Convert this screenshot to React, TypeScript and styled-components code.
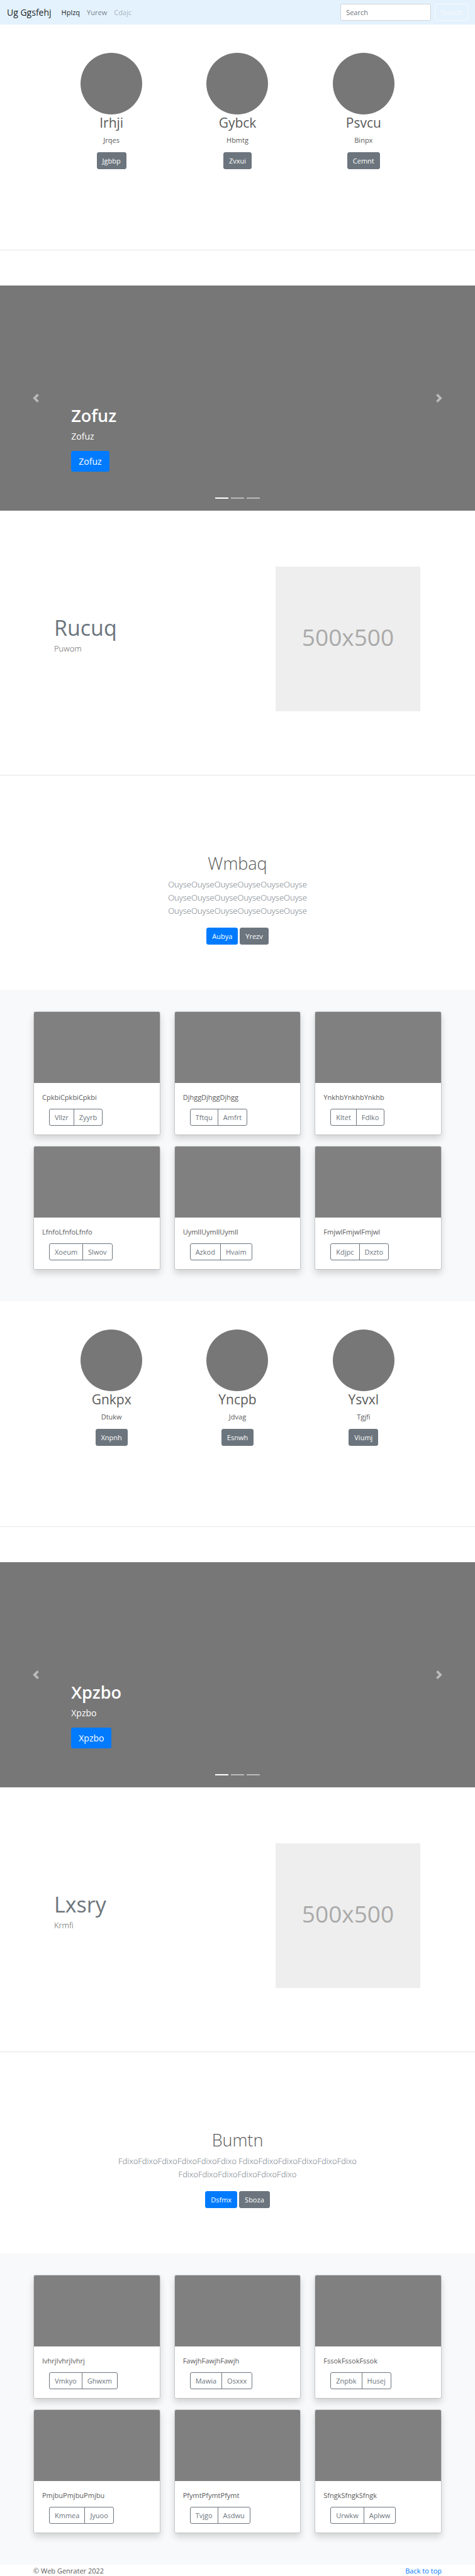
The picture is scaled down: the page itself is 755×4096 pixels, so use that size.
import React from "react";
import styled, { createGlobalStyle, css } from "styled-components";

const GlobalStyle = createGlobalStyle`
  *, *::before, *::after { box-sizing: border-box; }
  body {
    margin: 0;
    background: #fff;
    color: #5a5a5a;
    font: 400 11px/17px "Open Sans", "Noto Sans", sans-serif;
  }
  h1, h2, p { margin: 0; }
  a { color: #007bff; text-decoration: none; }
  button, input { font: inherit; }
`;

const Navbar = styled.nav`
  display: flex;
  align-items: center;
  justify-content: space-between;
  padding: 6px 11px;
  background: #e3f2fd;
`;

const NavGroup = styled.div`
  display: flex;
  align-items: center;
`;

const Brand = styled.a`
  margin-right: 16px;
  font-size: 14px;
  line-height: 21px;
  color: rgba(0, 0, 0, 0.9);
`;

const NavLinks = styled.ul`
  display: flex;
  gap: 11px;
  margin: 0;
  padding: 0;
  list-style: none;
`;

const NavLink = styled.a<{ $tone: number }>`
  color: rgba(0, 0, 0, ${(p) => p.$tone});
`;

const SearchForm = styled.form`
  display: flex;
  gap: 6px;
`;

const SearchInput = styled.input`
  width: 144px;
  padding: 4px 8px;
  border: 1px solid #ced4da;
  border-radius: 3px;
  background: #fff;
  color: #495057;
  &::placeholder {
    color: #6c757d;
    opacity: 1;
  }
`;

type Variant = "primary" | "secondary" | "light" | "outline";

const variants = {
  primary: css`
    background: #007bff;
    border-color: #007bff;
    color: #fff;
  `,
  secondary: css`
    background: #6c757d;
    border-color: #6c757d;
    color: #fff;
  `,
  light: css`
    background: transparent;
    border-color: #f8f9fa;
    color: #f8f9fa;
  `,
  outline: css`
    background: transparent;
    border-color: #6c757d;
    color: #6c757d;
  `,
};

const Button = styled.button<{ $variant: Variant; $large?: boolean }>`
  padding: ${(p) => (p.$large ? "5px 11px" : "4px 8px")};
  border: 1px solid;
  border-radius: 3px;
  font-size: ${(p) => (p.$large ? 14 : 11)}px;
  line-height: ${(p) => (p.$large ? 21 : 17)}px;
  cursor: pointer;
  ${(p) => variants[p.$variant]}
`;

const Divider = styled.hr`
  height: 1px;
  margin: 0;
  border: 0;
  background: #e5e5e5;
`;

const People = styled.section`
  display: grid;
  grid-template-columns: repeat(3, 1fr);
  padding: 45px 77px 128px;
`;

const Person = styled.article`
  display: flex;
  flex-direction: column;
  align-items: center;
`;

const Avatar = styled.div`
  width: 98px;
  height: 98px;
  border-radius: 50%;
  background: #777;
`;

const PersonName = styled.h2`
  margin-bottom: 5px;
  font-size: 21px;
  line-height: 27px;
  font-weight: 400;
`;

const PersonText = styled.p`
  margin-bottom: 11px;
`;

const CarouselFrame = styled.section`
  position: relative;
  display: grid;
  grid-template-columns: 15% 1fr 15%;
  height: 358px;
  margin-top: 56px;
  background: #777;
  color: #fff;
`;

const CarouselControl = styled.button`
  display: flex;
  align-items: center;
  justify-content: center;
  padding: 0;
  border: 0;
  background: none;
  opacity: 0.5;
  cursor: pointer;
`;

const Caption = styled.div`
  display: flex;
  flex-direction: column;
  align-items: flex-start;
  justify-content: flex-end;
  padding-bottom: 62px;
`;

const CaptionTitle = styled.h1`
  margin-bottom: 5px;
  font-size: 27px;
  line-height: 34px;
  font-weight: 600;
`;

const CaptionText = styled.p`
  margin-bottom: 13px;
  font-size: 14px;
  line-height: 21px;
`;

const Indicators = styled.div`
  position: absolute;
  left: 0;
  right: 0;
  bottom: 19px;
  display: flex;
  justify-content: center;
  gap: 4px;
`;

const Indicator = styled.button<{ $active: boolean }>`
  width: 21px;
  height: 2px;
  padding: 0;
  border: 0;
  background: #fff;
  opacity: ${(p) => (p.$active ? 1 : 0.5)};
`;

const FeatureRow = styled.section`
  display: grid;
  grid-template-columns: 1fr minmax(0, 230px);
  align-items: center;
  padding: 89px 87px 101px 86px;
`;

const FeatureTitle = styled.h2`
  margin-bottom: 2px;
  font-size: 34px;
  line-height: 42px;
  font-weight: 400;
  color: #6c757d;
`;

const FeatureText = styled.p`
  margin-bottom: 14px;
  font-size: 13px;
  line-height: 21px;
  font-weight: 300;
`;

const Placeholder = styled.div`
  display: flex;
  align-items: center;
  justify-content: center;
  aspect-ratio: 1;
  padding-bottom: 6px;
  background: #eee;
  color: #aaa;
  font-size: 37px;
  line-height: 42px;
`;

const Jumbotron = styled.section`
  display: flex;
  flex-direction: column;
  align-items: center;
  padding: 123px 53px 72px;
  text-align: center;
`;

const JumboTitle = styled.h1`
  margin-bottom: 6px;
  font-size: 27px;
  line-height: 34px;
  font-weight: 300;
`;

const JumboText = styled.p`
  max-width: 420px;
  margin-bottom: 16px;
  font-size: 13px;
  line-height: 21px;
  font-weight: 300;
  color: #6c757d;
`;

const JumboActions = styled.div`
  display: flex;
  gap: 3px;
`;

const Album = styled.section`
  display: grid;
  grid-template-columns: repeat(3, 1fr);
  gap: 17px 22px;
  padding: 34px 53px 50px;
  background: #f8f9fa;
`;

const Card = styled.article`
  overflow: hidden;
  border: 1px solid rgba(0, 0, 0, 0.125);
  border-radius: 3px;
  background: #fff;
  background-clip: padding-box;
  box-shadow: 0 6px 11px rgba(0, 0, 0, 0.15);
`;

const CardImage = styled.div`
  height: 113px;
  background: #808080;
`;

const CardBody = styled.div`
  padding: 14px 13px;
`;

const CardText = styled.p`
  margin-bottom: 10px;
`;

const ButtonGroup = styled.div`
  display: flex;
  margin-left: 11px;
  & > button:first-child {
    border-radius: 3px 0 0 3px;
  }
  & > button:last-child {
    margin-left: -1px;
    border-radius: 0 3px 3px 0;
  }
`;

const Footer = styled.footer`
  display: flex;
  justify-content: space-between;
  padding: 1px 53px 0;
`;

interface Block {
  people: [string, string, string][];
  slide: string;
  feature: [string, string];
  jumbo: { title: string; word: string; actions: [string, string] };
  cards: [string, string, string][];
}

const blocks: Block[] = [
  {
    people: [
      ["Irhji", "Jrqes", "Jgbbp"],
      ["Gybck", "Hbmtg", "Zvxui"],
      ["Psvcu", "Binpx", "Cemnt"],
    ],
    slide: "Zofuz",
    feature: ["Rucuq", "Puwom"],
    jumbo: { title: "Wmbaq", word: "Ouyse", actions: ["Aubya", "Yrezv"] },
    cards: [
      ["Cpkbi", "Vllzr", "Zyyrb"],
      ["Djhgg", "Tftqu", "Amfrt"],
      ["Ynkhb", "Kltet", "Fdlko"],
      ["Lfnfo", "Xoeum", "Slwov"],
      ["Uymll", "Azkod", "Hvaim"],
      ["Fmjwl", "Kdjpc", "Dxzto"],
    ],
  },
  {
    people: [
      ["Gnkpx", "Dtukw", "Xnpnh"],
      ["Yncpb", "Jdvag", "Esnwh"],
      ["Ysvxl", "Tgjfi", "Viumj"],
    ],
    slide: "Xpzbo",
    feature: ["Lxsry", "Krmfi"],
    jumbo: { title: "Bumtn", word: "Fdixo", actions: ["Dsfmx", "Sboza"] },
    cards: [
      ["Ivhrj", "Vmkyo", "Ghwxm"],
      ["Fawjh", "Mawia", "Osxxx"],
      ["Fssok", "Znpbk", "Husej"],
      ["Pmjbu", "Kmmea", "Jyuoo"],
      ["Pfymt", "Tvjgo", "Asdwu"],
      ["Sfngk", "Urwkw", "Aplww"],
    ],
  },
];

function Chevron({ direction }: { direction: "left" | "right" }) {
  return (
    <svg width="14" height="14" viewBox="0 0 8 8" fill="#fff" aria-hidden="true">
      {direction === "left" ? (
        <path d="M5.25 0l-4 4 4 4 1.5-1.5-2.5-2.5 2.5-2.5-1.5-1.5z" />
      ) : (
        <path d="M2.75 0l-1.5 1.5 2.5 2.5-2.5 2.5 1.5 1.5 4-4-4-4z" />
      )}
    </svg>
  );
}

function Carousel({ label }: { label: string }) {
  return (
    <CarouselFrame>
      <CarouselControl type="button" aria-label="Previous">
        <Chevron direction="left" />
      </CarouselControl>
      <Caption>
        <CaptionTitle>{label}</CaptionTitle>
        <CaptionText>{label}</CaptionText>
        <Button type="button" $variant="primary" $large>
          {label}
        </Button>
      </Caption>
      <CarouselControl type="button" aria-label="Next">
        <Chevron direction="right" />
      </CarouselControl>
      <Indicators>
        {[0, 1, 2].map((i) => (
          <Indicator key={i} type="button" $active={i === 0} aria-label={`Slide ${i + 1}`} />
        ))}
      </Indicators>
    </CarouselFrame>
  );
}

function PageBlock({ people, slide, feature, jumbo, cards }: Block) {
  const sentence = Array(3).fill(jumbo.word.repeat(6)).join(" ");
  return (
    <>
      <People>
        {people.map(([name, text, action]) => (
          <Person key={name}>
            <Avatar />
            <PersonName>{name}</PersonName>
            <PersonText>{text}</PersonText>
            <Button type="button" $variant="secondary">
              {action}
            </Button>
          </Person>
        ))}
      </People>
      <Divider />
      <Carousel label={slide} />
      <FeatureRow>
        <div>
          <FeatureTitle>{feature[0]}</FeatureTitle>
          <FeatureText>{feature[1]}</FeatureText>
        </div>
        <Placeholder>500x500</Placeholder>
      </FeatureRow>
      <Divider />
      <Jumbotron>
        <JumboTitle>{jumbo.title}</JumboTitle>
        <JumboText>{sentence}</JumboText>
        <JumboActions>
          <Button type="button" $variant="primary">
            {jumbo.actions[0]}
          </Button>
          <Button type="button" $variant="secondary">
            {jumbo.actions[1]}
          </Button>
        </JumboActions>
      </Jumbotron>
      <Album>
        {cards.map(([word, first, second]) => (
          <Card key={word}>
            <CardImage />
            <CardBody>
              <CardText>{word.repeat(3)}</CardText>
              <ButtonGroup>
                <Button type="button" $variant="outline">
                  {first}
                </Button>
                <Button type="button" $variant="outline">
                  {second}
                </Button>
              </ButtonGroup>
            </CardBody>
          </Card>
        ))}
      </Album>
    </>
  );
}

export default function App() {
  return (
    <>
      <GlobalStyle />
      <Navbar id="top">
        <NavGroup>
          <Brand href="#">Ug Ggsfehj</Brand>
          <NavLinks>
            <li>
              <NavLink href="#" $tone={0.9}>Hplzq</NavLink>
            </li>
            <li>
              <NavLink href="#" $tone={0.5}>Yurew</NavLink>
            </li>
            <li>
              <NavLink href="#" $tone={0.3}>Cdajc</NavLink>
            </li>
          </NavLinks>
        </NavGroup>
        <SearchForm onSubmit={(e) => e.preventDefault()}>
          <SearchInput type="text" placeholder="Search" aria-label="Search" />
          <Button type="submit" $variant="light">
            Search
          </Button>
        </SearchForm>
      </Navbar>
      <main>
        {blocks.map((block) => (
          <PageBlock key={block.slide} {...block} />
        ))}
      </main>
      <Footer>
        <span>© Web Genrater 2022</span>
        <a href="#top">Back to top</a>
      </Footer>
    </>
  );
}
